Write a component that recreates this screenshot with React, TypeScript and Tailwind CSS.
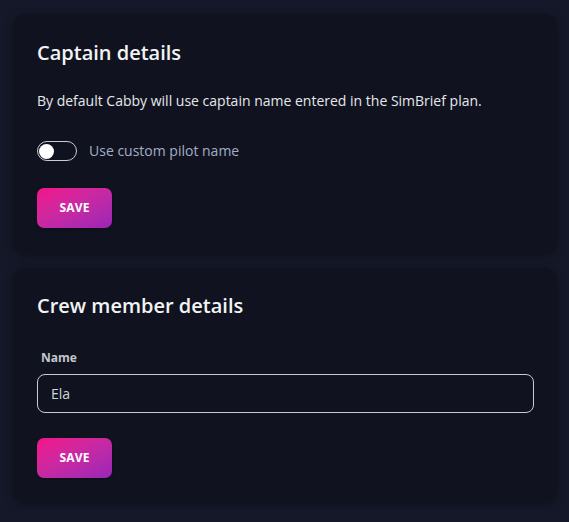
import React, { useState } from "react";

function SaveButton() {
  return (
    <button className="w-[75px] h-[40px] rounded-[7px] bg-gradient-to-br from-[#f50f8a] to-[#9a24b8] text-white text-[12px] font-bold tracking-[0.2px] shadow-[0_1px_3px_rgba(0,0,0,0.4)]">
      SAVE
    </button>
  );
}

export default function App() {
  const [on, setOn] = useState(false);
  const [name, setName] = useState("Ela");
  return (
    <div
      className="w-[569px] h-[522px] bg-[#141828] px-[13px] pt-[14px] flex flex-col gap-[15px] overflow-hidden"
      style={{ fontFamily: '"Open Sans", "Noto Sans", sans-serif' }}
    >
      <div className="w-[544px] h-[239px] rounded-[13px] bg-[#10131f] shadow-[0_2px_8px_rgba(0,0,0,0.35)] px-[24px] pt-[25px]">
        <h2 className="text-[20px] leading-[28px] font-semibold text-[#f2f3f5]">Captain details</h2>
        <p className="mt-[24px] text-[14px] leading-[20px] text-[#e6e8ec]">
          By default Cabby will use captain name entered in the SimBrief plan.
        </p>
        <div className="mt-[30px] flex items-center gap-[12px]">
          <button
            onClick={() => setOn(!on)}
            className="w-[40px] h-[20px] rounded-full border-[1.5px] border-[#c9ccd4] flex items-center px-[1px]"
          >
            <span className="w-[15px] h-[15px] rounded-full bg-white block" />
          </button>
          <span className="text-[14px] leading-[20px] text-[#a3aec6]">Use custom pilot name</span>
        </div>
        <div className="mt-[27px]">
          <SaveButton />
        </div>
      </div>

      <div className="w-[544px] h-[234px] rounded-[13px] bg-[#10131f] shadow-[0_2px_8px_rgba(0,0,0,0.35)] px-[24px] pt-[24px]">
        <h2 className="text-[20px] leading-[28px] font-semibold text-[#f2f3f5]">Crew member details</h2>
        <label className="block mt-[30px] ml-[4px] text-[12px] leading-[16px] font-bold text-[#c3c6cd]">Name</label>
        <input
          value={name}
          onChange={(e) => setName(e.target.value)}
          className="mt-[8px] w-[497px] h-[39px] rounded-[8px] border border-[#c8cbd2] bg-transparent px-[13px] text-[14px] text-[#d3d6dc] outline-none"
        />
        <div className="mt-[25px]">
          <SaveButton />
        </div>
      </div>
    </div>
  );
}
